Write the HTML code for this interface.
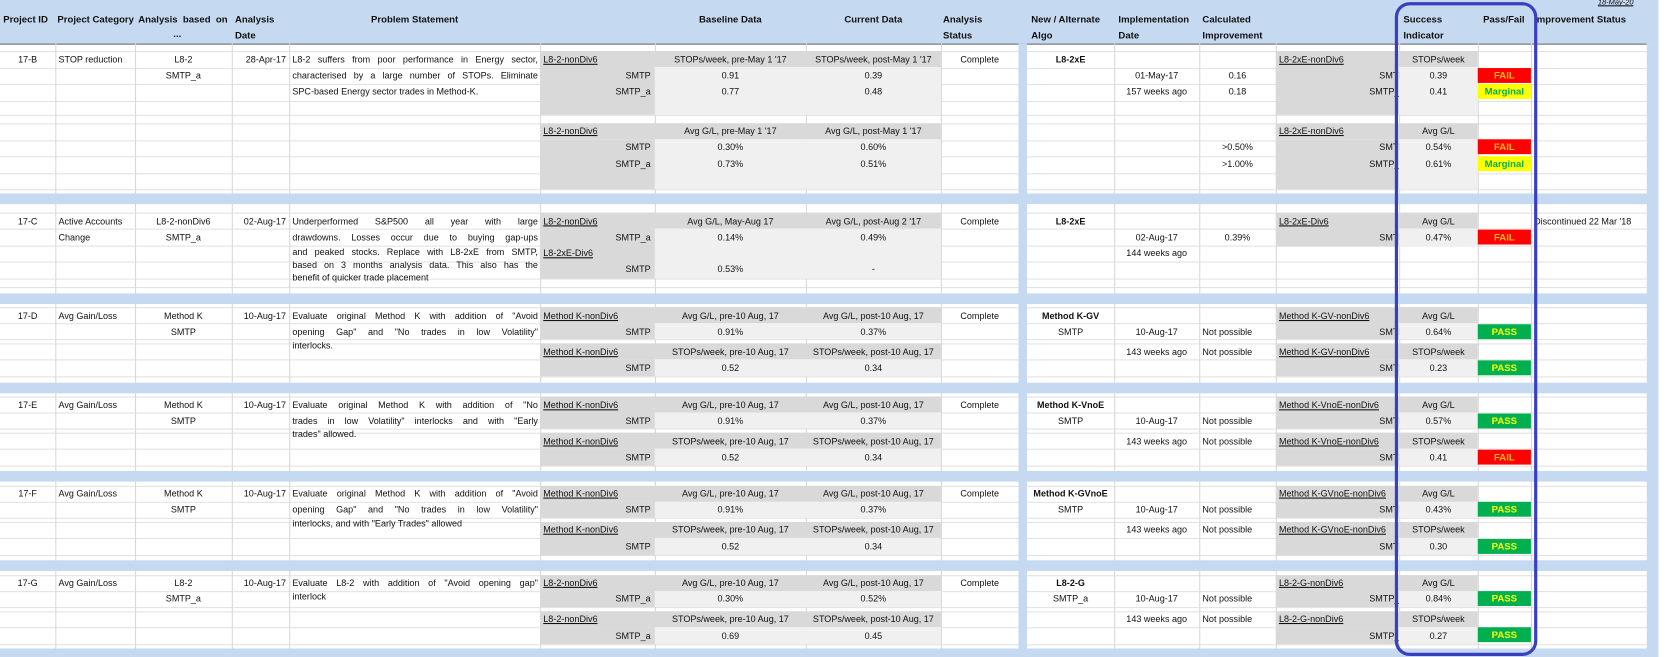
<!DOCTYPE html>
<html><head><meta charset="utf-8"><style>
html,body{margin:0;padding:0;width:1667px;height:657px;overflow:hidden;background:#fff}
#w{position:absolute;left:0;top:0;width:1568px;height:618px;transform:scale(1.06314);transform-origin:0 0;font-family:"Liberation Sans",Arial,sans-serif;color:#111}
.t{position:absolute;font-size:8.5px;line-height:12px;white-space:nowrap}
.j{white-space:normal;width:231px;height:12px;overflow:hidden;text-align:justify;text-align-last:justify}
.h{position:absolute;font-size:9px;font-weight:bold;line-height:14px;white-space:nowrap}
.hl{position:absolute;height:1px;left:0;width:1549px;background:#e2e2e2}
.vl{position:absolute;width:1px;top:41px;height:577px;background:#d8d8d8}
.bb{position:absolute;left:0;width:1560px;background:#c5d9f1}
.dg{position:absolute;background:#d9d9d9}
.lg{position:absolute;background:#f0f0f0}
.cA{left:0;width:52px;text-align:center}.cB{left:55px}.cC{left:127px;width:91px;text-align:center}
.cD{left:218px;width:51px;text-align:right}.cE{left:275px}
.cFl{left:511px;text-decoration:underline}.cFr{left:508px;width:104px;text-align:right}
.cG{left:616px;width:142px;text-align:center}.cH{left:758px;width:127px;text-align:center}
.cI{left:885px;width:73px;text-align:center}.cJ{left:966px;width:82px;text-align:center}
.cK{left:1048px;width:80px;text-align:center}.cL{left:1128px;width:72px;text-align:center}.cLl{left:1131px}
.cMl{left:1203px;width:113px;overflow:hidden;text-decoration:underline}
.cMr{left:1200px;width:121px;text-align:right;clip-path:inset(0 5px 0 0)}
.cN{left:1316px;width:74px;text-align:center}
.bd{position:absolute;left:1390px;width:50px;height:14px;line-height:14px;text-align:center;font-size:9px;font-weight:bold}
.F{background:#ff0000;color:#ffc000}.M{background:#ffff00;color:#00b050}.P{background:#00b050;color:#ffff00}
.b{font-weight:bold}
</style></head><body><div id="w">
<div class="bb" style="top:0;height:41px"></div>
<div style="position:absolute;left:0;top:41px;width:1549px;height:1px;background:#666"></div>
<div class="hl" style="top:48px"></div><div class="hl" style="top:64px"></div><div class="hl" style="top:79px"></div><div class="hl" style="top:95px"></div><div class="hl" style="top:108px"></div><div class="hl" style="top:116px"></div><div class="hl" style="top:132px"></div><div class="hl" style="top:147px"></div><div class="hl" style="top:163px"></div><div class="hl" style="top:178px"></div>
<div class="hl" style="top:200px"></div><div class="hl" style="top:215px"></div><div class="hl" style="top:231px"></div><div class="hl" style="top:246px"></div><div class="hl" style="top:262px"></div><div class="hl" style="top:270px"></div>
<div class="hl" style="top:289px"></div><div class="hl" style="top:304px"></div><div class="hl" style="top:319px"></div><div class="hl" style="top:323px"></div><div class="hl" style="top:338px"></div><div class="hl" style="top:354px"></div>
<div class="hl" style="top:373px"></div><div class="hl" style="top:388px"></div><div class="hl" style="top:403px"></div><div class="hl" style="top:407px"></div><div class="hl" style="top:422px"></div><div class="hl" style="top:438px"></div>
<div class="hl" style="top:457px"></div><div class="hl" style="top:472px"></div><div class="hl" style="top:487px"></div><div class="hl" style="top:491px"></div><div class="hl" style="top:506px"></div><div class="hl" style="top:522px"></div>
<div class="hl" style="top:541px"></div><div class="hl" style="top:556px"></div><div class="hl" style="top:571px"></div><div class="hl" style="top:575px"></div><div class="hl" style="top:590px"></div><div class="hl" style="top:606px"></div>
<div class="vl" style="left:52px"></div><div class="vl" style="left:127px"></div><div class="vl" style="left:218px"></div><div class="vl" style="left:272px"></div><div class="vl" style="left:508px"></div><div class="vl" style="left:616px"></div><div class="vl" style="left:758px"></div><div class="vl" style="left:885px"></div><div class="vl" style="left:1048px"></div><div class="vl" style="left:1128px"></div><div class="vl" style="left:1200px"></div><div class="vl" style="left:1316px"></div><div class="vl" style="left:1390px"></div><div class="vl" style="left:1440px"></div>
<div class="dg" style="left:508px;top:48px;width:377px;height:15px"></div><div class="dg" style="left:508px;top:63px;width:108px;height:45px"></div><div class="lg" style="left:616px;top:63px;width:269px;height:45px"></div>
<div class="dg" style="left:1200px;top:48px;width:190px;height:15px"></div><div class="dg" style="left:1200px;top:63px;width:116px;height:45px"></div><div class="lg" style="left:1316px;top:63px;width:74px;height:45px"></div>
<div class="dg" style="left:508px;top:116px;width:377px;height:15px"></div><div class="dg" style="left:508px;top:131px;width:108px;height:47px"></div><div class="lg" style="left:616px;top:131px;width:269px;height:47px"></div>
<div class="dg" style="left:1200px;top:116px;width:190px;height:15px"></div><div class="dg" style="left:1200px;top:131px;width:116px;height:47px"></div><div class="lg" style="left:1316px;top:131px;width:74px;height:47px"></div>
<div class="dg" style="left:508px;top:200px;width:377px;height:15px"></div><div class="dg" style="left:508px;top:215px;width:108px;height:47px"></div><div class="lg" style="left:616px;top:215px;width:269px;height:47px"></div>
<div class="dg" style="left:1200px;top:200px;width:190px;height:15px"></div><div class="dg" style="left:1200px;top:215px;width:116px;height:17px"></div><div class="lg" style="left:1316px;top:215px;width:74px;height:17px"></div>
<div class="dg" style="left:508px;top:289px;width:377px;height:15px"></div><div class="dg" style="left:508px;top:304px;width:108px;height:15px"></div><div class="lg" style="left:616px;top:304px;width:269px;height:15px"></div>
<div class="dg" style="left:508px;top:323px;width:377px;height:15px"></div><div class="dg" style="left:508px;top:338px;width:108px;height:16px"></div><div class="lg" style="left:616px;top:338px;width:269px;height:16px"></div>
<div class="dg" style="left:1200px;top:289px;width:190px;height:15px"></div><div class="dg" style="left:1200px;top:304px;width:116px;height:15px"></div><div class="lg" style="left:1316px;top:304px;width:74px;height:15px"></div>
<div class="dg" style="left:1200px;top:323px;width:190px;height:15px"></div><div class="dg" style="left:1200px;top:338px;width:116px;height:16px"></div><div class="lg" style="left:1316px;top:338px;width:74px;height:16px"></div>
<div class="dg" style="left:508px;top:373px;width:377px;height:15px"></div><div class="dg" style="left:508px;top:388px;width:108px;height:15px"></div><div class="lg" style="left:616px;top:388px;width:269px;height:15px"></div>
<div class="dg" style="left:508px;top:407px;width:377px;height:15px"></div><div class="dg" style="left:508px;top:422px;width:108px;height:16px"></div><div class="lg" style="left:616px;top:422px;width:269px;height:16px"></div>
<div class="dg" style="left:1200px;top:373px;width:190px;height:15px"></div><div class="dg" style="left:1200px;top:388px;width:116px;height:15px"></div><div class="lg" style="left:1316px;top:388px;width:74px;height:15px"></div>
<div class="dg" style="left:1200px;top:407px;width:190px;height:15px"></div><div class="dg" style="left:1200px;top:422px;width:116px;height:16px"></div><div class="lg" style="left:1316px;top:422px;width:74px;height:16px"></div>
<div class="dg" style="left:508px;top:457px;width:377px;height:15px"></div><div class="dg" style="left:508px;top:472px;width:108px;height:15px"></div><div class="lg" style="left:616px;top:472px;width:269px;height:15px"></div>
<div class="dg" style="left:508px;top:491px;width:377px;height:15px"></div><div class="dg" style="left:508px;top:506px;width:108px;height:16px"></div><div class="lg" style="left:616px;top:506px;width:269px;height:16px"></div>
<div class="dg" style="left:1200px;top:457px;width:190px;height:15px"></div><div class="dg" style="left:1200px;top:472px;width:116px;height:15px"></div><div class="lg" style="left:1316px;top:472px;width:74px;height:15px"></div>
<div class="dg" style="left:1200px;top:491px;width:190px;height:15px"></div><div class="dg" style="left:1200px;top:506px;width:116px;height:16px"></div><div class="lg" style="left:1316px;top:506px;width:74px;height:16px"></div>
<div class="dg" style="left:508px;top:541px;width:377px;height:15px"></div><div class="dg" style="left:508px;top:556px;width:108px;height:15px"></div><div class="lg" style="left:616px;top:556px;width:269px;height:15px"></div>
<div class="dg" style="left:508px;top:575px;width:377px;height:15px"></div><div class="dg" style="left:508px;top:590px;width:108px;height:16px"></div><div class="lg" style="left:616px;top:590px;width:269px;height:16px"></div>
<div class="dg" style="left:1200px;top:541px;width:190px;height:15px"></div><div class="dg" style="left:1200px;top:556px;width:116px;height:15px"></div><div class="lg" style="left:1316px;top:556px;width:74px;height:15px"></div>
<div class="dg" style="left:1200px;top:575px;width:190px;height:15px"></div><div class="dg" style="left:1200px;top:590px;width:116px;height:16px"></div><div class="lg" style="left:1316px;top:590px;width:74px;height:16px"></div>
<div class="bb" style="top:182px;height:10px"></div><div class="bb" style="top:276px;height:10px"></div><div class="bb" style="top:360px;height:10px"></div><div class="bb" style="top:443px;height:10px"></div><div class="bb" style="top:527px;height:10px"></div><div class="bb" style="top:610px;height:8px"></div>
<div style="position:absolute;left:958px;top:41px;width:8px;height:577px;background:#c5d9f1"></div>
<div style="position:absolute;left:1549px;top:41px;width:11px;height:577px;background:#c5d9f1"></div>
<div class="h" style="left:3px;top:11px">Project ID</div>
<div class="h" style="left:54px;top:11px">Project Category</div>
<div class="h" style="left:130px;top:11px">Analysis&nbsp; based&nbsp; on</div><div class="h" style="left:163px;top:25px">...</div>
<div class="h" style="left:221px;top:11px">Analysis</div><div class="h" style="left:221px;top:26px">Date</div>
<div class="h" style="left:272px;width:236px;text-align:center;top:11px">Problem Statement</div>
<div class="h" style="left:616px;width:142px;text-align:center;top:11px">Baseline Data</div>
<div class="h" style="left:758px;width:127px;text-align:center;top:11px">Current Data</div>
<div class="h" style="left:887px;top:11px">Analysis</div><div class="h" style="left:887px;top:26px">Status</div>
<div class="h" style="left:970px;top:11px">New / Alternate</div><div class="h" style="left:970px;top:26px">Algo</div>
<div class="h" style="left:1052px;top:11px">Implementation</div><div class="h" style="left:1052px;top:26px">Date</div>
<div class="h" style="left:1131px;top:11px">Calculated</div><div class="h" style="left:1131px;top:26px">Improvement</div>
<div class="h" style="left:1320px;top:11px">Success</div><div class="h" style="left:1320px;top:26px">Indicator</div>
<div class="h" style="left:1395px;top:11px">Pass/Fail</div>
<div class="h" style="left:1443px;top:11px">Improvement Status</div>
<div class="t" style="left:1503px;top:-3px;font-size:7px;font-style:italic;text-decoration:underline">18-May-20</div>
<!-- 17-B -->
<div class="t cA" style="top:50px">17-B</div><div class="t cB" style="top:50px">STOP reduction</div>
<div class="t cC" style="top:50px">L8-2</div><div class="t cC" style="top:65px">SMTP_a</div>
<div class="t cD" style="top:50px">28-Apr-17</div>
<div class="t cE j" style="top:50px">L8-2 suffers from poor performance in Energy sector,</div>
<div class="t cE j" style="top:65px">characterised by a large number of STOPs. Eliminate</div>
<div class="t cE" style="top:80px">SPC-based Energy sector trades in Method-K.</div>
<div class="t cFl" style="top:50px">L8-2-nonDiv6</div><div class="t cFr" style="top:65px">SMTP</div><div class="t cFr" style="top:80px">SMTP_a</div>
<div class="t cG" style="top:50px">STOPs/week, pre-May 1 '17</div><div class="t cG" style="top:65px">0.91</div><div class="t cG" style="top:80px">0.77</div>
<div class="t cH" style="top:50px">STOPs/week, post-May 1 '17</div><div class="t cH" style="top:65px">0.39</div><div class="t cH" style="top:80px">0.48</div>
<div class="t cI" style="top:50px">Complete</div><div class="t cJ b" style="top:50px">L8-2xE</div>
<div class="t cK" style="top:65px">01-May-17</div><div class="t cK" style="top:80px">157 weeks ago</div>
<div class="t cL" style="top:65px">0.16</div><div class="t cL" style="top:80px">0.18</div>
<div class="t cMl" style="top:50px">L8-2xE-nonDiv6</div><div class="t cMr" style="top:65px">SMTP</div><div class="t cMr" style="top:80px">SMTP_a</div>
<div class="t cN" style="top:50px">STOPs/week</div><div class="t cN" style="top:65px">0.39</div><div class="t cN" style="top:80px">0.41</div>
<div class="bd F" style="top:64px">FAIL</div><div class="bd M" style="top:79px">Marginal</div>
<div class="t cFl" style="top:117px">L8-2-nonDiv6</div><div class="t cFr" style="top:132px">SMTP</div><div class="t cFr" style="top:148px">SMTP_a</div>
<div class="t cG" style="top:117px">Avg G/L, pre-May 1 '17</div><div class="t cG" style="top:132px">0.30%</div><div class="t cG" style="top:148px">0.73%</div>
<div class="t cH" style="top:117px">Avg G/L, post-May 1 '17</div><div class="t cH" style="top:132px">0.60%</div><div class="t cH" style="top:148px">0.51%</div>
<div class="t cL" style="top:132px">&gt;0.50%</div><div class="t cL" style="top:148px">&gt;1.00%</div>
<div class="t cMl" style="top:117px">L8-2xE-nonDiv6</div><div class="t cMr" style="top:132px">SMTP</div><div class="t cMr" style="top:148px">SMTP_a</div>
<div class="t cN" style="top:117px">Avg G/L</div><div class="t cN" style="top:132px">0.54%</div><div class="t cN" style="top:148px">0.61%</div>
<div class="bd F" style="top:131px">FAIL</div><div class="bd M" style="top:147px">Marginal</div>
<!-- 17-C -->
<div class="t cA" style="top:202px">17-C</div><div class="t cB" style="top:202px">Active Accounts</div><div class="t cB" style="top:217px">Change</div>
<div class="t cC" style="top:202px">L8-2-nonDiv6</div><div class="t cC" style="top:217px">SMTP_a</div>
<div class="t cD" style="top:202px">02-Aug-17</div>
<div class="t cE j" style="top:202px">Underperformed S&amp;P500 all year with large</div>
<div class="t cE j" style="top:217px">drawdowns. Losses occur due to buying gap-ups</div>
<div class="t cE j" style="top:231px">and peaked stocks. Replace with L8-2xE from SMTP,</div>
<div class="t cE j" style="top:243px">based on 3 months analysis data. This also has the</div>
<div class="t cE" style="top:255px">benefit of quicker trade placement</div>
<div class="t cFl" style="top:202px">L8-2-nonDiv6</div><div class="t cFr" style="top:217px">SMTP_a</div>
<div class="t cFl" style="top:232px">L8-2xE-Div6</div><div class="t cFr" style="top:247px">SMTP</div>
<div class="t cG" style="top:202px">Avg G/L, May-Aug 17</div><div class="t cG" style="top:217px">0.14%</div><div class="t cG" style="top:247px">0.53%</div>
<div class="t cH" style="top:202px">Avg G/L, post-Aug 2 '17</div><div class="t cH" style="top:217px">0.49%</div><div class="t cH" style="top:247px">-</div>
<div class="t cI" style="top:202px">Complete</div><div class="t cJ b" style="top:202px">L8-2xE</div>
<div class="t cK" style="top:217px">02-Aug-17</div><div class="t cK" style="top:232px">144 weeks ago</div>
<div class="t cL" style="top:217px">0.39%</div>
<div class="t cMl" style="top:202px">L8-2xE-Div6</div><div class="t cMr" style="top:217px">SMTP</div>
<div class="t cN" style="top:202px">Avg G/L</div><div class="t cN" style="top:217px">0.47%</div>
<div class="bd F" style="top:216px">FAIL</div>
<div class="t" style="left:1443px;top:202px">Discontinued 22 Mar '18</div>
<!-- 17-D -->
<div class="t cA" style="top:291px">17-D</div><div class="t cB" style="top:291px">Avg Gain/Loss</div>
<div class="t cC" style="top:291px">Method K</div><div class="t cC" style="top:306px">SMTP</div><div class="t cD" style="top:291px">10-Aug-17</div>
<div class="t cE j" style="top:291px">Evaluate original Method K with addition of "Avoid</div>
<div class="t cE j" style="top:306px">opening Gap" and "No trades in low Volatility"</div>
<div class="t cE" style="top:319px">interlocks.</div>
<div class="t cFl" style="top:291px">Method K-nonDiv6</div><div class="t cFr" style="top:306px">SMTP</div>
<div class="t cFl" style="top:325px">Method K-nonDiv6</div><div class="t cFr" style="top:340px">SMTP</div>
<div class="t cG" style="top:291px">Avg G/L, pre-10 Aug, 17</div><div class="t cG" style="top:306px">0.91%</div><div class="t cG" style="top:325px">STOPs/week, pre-10 Aug, 17</div><div class="t cG" style="top:340px">0.52</div>
<div class="t cH" style="top:291px">Avg G/L, post-10 Aug, 17</div><div class="t cH" style="top:306px">0.37%</div><div class="t cH" style="top:325px">STOPs/week, post-10 Aug, 17</div><div class="t cH" style="top:340px">0.34</div>
<div class="t cI" style="top:291px">Complete</div><div class="t cJ b" style="top:291px">Method K-GV</div><div class="t cJ" style="top:306px">SMTP</div>
<div class="t cK" style="top:306px">10-Aug-17</div><div class="t cK" style="top:325px">143 weeks ago</div>
<div class="t cLl" style="top:306px">Not possible</div><div class="t cLl" style="top:325px">Not possible</div>
<div class="t cMl" style="top:291px">Method K-GV-nonDiv6</div><div class="t cMr" style="top:306px">SMTP</div><div class="t cMl" style="top:325px">Method K-GV-nonDiv6</div><div class="t cMr" style="top:340px">SMTP</div>
<div class="t cN" style="top:291px">Avg G/L</div><div class="t cN" style="top:306px">0.64%</div><div class="t cN" style="top:325px">STOPs/week</div><div class="t cN" style="top:340px">0.23</div>
<div class="bd P" style="top:305px">PASS</div><div class="bd P" style="top:339px">PASS</div>
<!-- 17-E -->
<div class="t cA" style="top:375px">17-E</div><div class="t cB" style="top:375px">Avg Gain/Loss</div>
<div class="t cC" style="top:375px">Method K</div><div class="t cC" style="top:390px">SMTP</div><div class="t cD" style="top:375px">10-Aug-17</div>
<div class="t cE j" style="top:375px">Evaluate original Method K with addition of "No</div>
<div class="t cE j" style="top:390px">trades in low Volatility" interlocks and with "Early</div>
<div class="t cE" style="top:402px">trades" allowed.</div>
<div class="t cFl" style="top:375px">Method K-nonDiv6</div><div class="t cFr" style="top:390px">SMTP</div>
<div class="t cFl" style="top:409px">Method K-nonDiv6</div><div class="t cFr" style="top:424px">SMTP</div>
<div class="t cG" style="top:375px">Avg G/L, pre-10 Aug, 17</div><div class="t cG" style="top:390px">0.91%</div><div class="t cG" style="top:409px">STOPs/week, pre-10 Aug, 17</div><div class="t cG" style="top:424px">0.52</div>
<div class="t cH" style="top:375px">Avg G/L, post-10 Aug, 17</div><div class="t cH" style="top:390px">0.37%</div><div class="t cH" style="top:409px">STOPs/week, post-10 Aug, 17</div><div class="t cH" style="top:424px">0.34</div>
<div class="t cI" style="top:375px">Complete</div><div class="t cJ b" style="top:375px">Method K-VnoE</div><div class="t cJ" style="top:390px">SMTP</div>
<div class="t cK" style="top:390px">10-Aug-17</div><div class="t cK" style="top:409px">143 weeks ago</div>
<div class="t cLl" style="top:390px">Not possible</div><div class="t cLl" style="top:409px">Not possible</div>
<div class="t cMl" style="top:375px">Method K-VnoE-nonDiv6</div><div class="t cMr" style="top:390px">SMTP</div><div class="t cMl" style="top:409px">Method K-VnoE-nonDiv6</div><div class="t cMr" style="top:424px">SMTP</div>
<div class="t cN" style="top:375px">Avg G/L</div><div class="t cN" style="top:390px">0.57%</div><div class="t cN" style="top:409px">STOPs/week</div><div class="t cN" style="top:424px">0.41</div>
<div class="bd P" style="top:389px">PASS</div><div class="bd F" style="top:423px">FAIL</div>
<!-- 17-F -->
<div class="t cA" style="top:458px">17-F</div><div class="t cB" style="top:458px">Avg Gain/Loss</div>
<div class="t cC" style="top:458px">Method K</div><div class="t cC" style="top:473px">SMTP</div><div class="t cD" style="top:458px">10-Aug-17</div>
<div class="t cE j" style="top:458px">Evaluate original Method K with addition of "Avoid</div>
<div class="t cE j" style="top:473px">opening Gap" and "No trades in low Volatility"</div>
<div class="t cE" style="top:486px">interlocks, and with "Early Trades" allowed</div>
<div class="t cFl" style="top:458px">Method K-nonDiv6</div><div class="t cFr" style="top:473px">SMTP</div>
<div class="t cFl" style="top:492px">Method K-nonDiv6</div><div class="t cFr" style="top:508px">SMTP</div>
<div class="t cG" style="top:458px">Avg G/L, pre-10 Aug, 17</div><div class="t cG" style="top:473px">0.91%</div><div class="t cG" style="top:492px">STOPs/week, pre-10 Aug, 17</div><div class="t cG" style="top:508px">0.52</div>
<div class="t cH" style="top:458px">Avg G/L, post-10 Aug, 17</div><div class="t cH" style="top:473px">0.37%</div><div class="t cH" style="top:492px">STOPs/week, post-10 Aug, 17</div><div class="t cH" style="top:508px">0.34</div>
<div class="t cI" style="top:458px">Complete</div><div class="t cJ b" style="top:458px">Method K-GVnoE</div><div class="t cJ" style="top:473px">SMTP</div>
<div class="t cK" style="top:473px">10-Aug-17</div><div class="t cK" style="top:492px">143 weeks ago</div>
<div class="t cLl" style="top:473px">Not possible</div><div class="t cLl" style="top:492px">Not possible</div>
<div class="t cMl" style="top:458px">Method K-GVnoE-nonDiv6</div><div class="t cMr" style="top:473px">SMTP</div><div class="t cMl" style="top:492px">Method K-GVnoE-nonDiv6</div><div class="t cMr" style="top:508px">SMTP</div>
<div class="t cN" style="top:458px">Avg G/L</div><div class="t cN" style="top:473px">0.43%</div><div class="t cN" style="top:492px">STOPs/week</div><div class="t cN" style="top:508px">0.30</div>
<div class="bd P" style="top:472px">PASS</div><div class="bd P" style="top:507px">PASS</div>
<!-- 17-G -->
<div class="t cA" style="top:542px">17-G</div><div class="t cB" style="top:542px">Avg Gain/Loss</div>
<div class="t cC" style="top:542px">L8-2</div><div class="t cC" style="top:557px">SMTP_a</div><div class="t cD" style="top:542px">10-Aug-17</div>
<div class="t cE j" style="top:542px">Evaluate L8-2 with addition of "Avoid opening gap"</div>
<div class="t cE" style="top:555px">interlock</div>
<div class="t cFl" style="top:542px">L8-2-nonDiv6</div><div class="t cFr" style="top:557px">SMTP_a</div>
<div class="t cFl" style="top:576px">L8-2-nonDiv6</div><div class="t cFr" style="top:592px">SMTP_a</div>
<div class="t cG" style="top:542px">Avg G/L, pre-10 Aug, 17</div><div class="t cG" style="top:557px">0.30%</div><div class="t cG" style="top:576px">STOPs/week, pre-10 Aug, 17</div><div class="t cG" style="top:592px">0.69</div>
<div class="t cH" style="top:542px">Avg G/L, post-10 Aug, 17</div><div class="t cH" style="top:557px">0.52%</div><div class="t cH" style="top:576px">STOPs/week, post-10 Aug, 17</div><div class="t cH" style="top:592px">0.45</div>
<div class="t cI" style="top:542px">Complete</div><div class="t cJ b" style="top:542px">L8-2-G</div><div class="t cJ" style="top:557px">SMTP_a</div>
<div class="t cK" style="top:557px">10-Aug-17</div><div class="t cK" style="top:576px">143 weeks ago</div>
<div class="t cLl" style="top:557px">Not possible</div><div class="t cLl" style="top:576px">Not possible</div>
<div class="t cMl" style="top:542px">L8-2-G-nonDiv6</div><div class="t cMr" style="top:557px">SMTP_a</div><div class="t cMl" style="top:576px">L8-2-G-nonDiv6</div><div class="t cMr" style="top:592px">SMTP_a</div>
<div class="t cN" style="top:542px">Avg G/L</div><div class="t cN" style="top:557px">0.84%</div><div class="t cN" style="top:576px">STOPs/week</div><div class="t cN" style="top:592px">0.27</div>
<div class="bd P" style="top:556px">PASS</div><div class="bd P" style="top:590px">PASS</div>
<div style="position:absolute;left:1312px;top:2px;width:128px;height:609px;border:3px solid #3a3fc0;border-radius:14px"></div>
</div></body></html>
